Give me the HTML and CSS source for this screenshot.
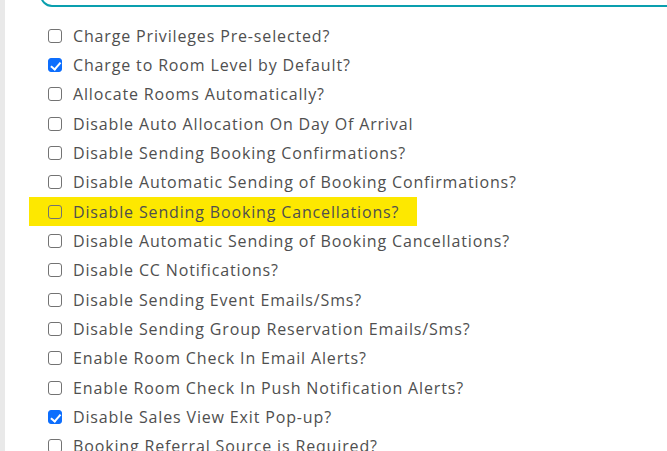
FILE: index.html
```html
<!DOCTYPE html>
<html>
<head>
<meta charset="utf-8">
<link rel="stylesheet" href="styles.css">
</head>
<body>
<div class="page">
  <div class="strip"></div>
  <div class="content">
    <div class="prev-field"></div>
    <ul class="options">
      <li class="opt"><input type="checkbox"><span>Charge Privileges Pre-selected?</span></li>
      <li class="opt"><input type="checkbox" checked><span>Charge to Room Level by Default?</span></li>
      <li class="opt"><input type="checkbox"><span>Allocate Rooms Automatically?</span></li>
      <li class="opt"><input type="checkbox"><span>Disable Auto Allocation On Day Of Arrival</span></li>
      <li class="opt"><input type="checkbox"><span>Disable Sending Booking Confirmations?</span></li>
      <li class="opt"><input type="checkbox"><span>Disable Automatic Sending of Booking Confirmations?</span></li>
      <li class="opt hl"><input type="checkbox"><span>Disable Sending Booking Cancellations?</span></li>
      <li class="opt"><input type="checkbox"><span>Disable Automatic Sending of Booking Cancellations?</span></li>
      <li class="opt"><input type="checkbox"><span>Disable CC Notifications?</span></li>
      <li class="opt"><input type="checkbox"><span>Disable Sending Event Emails/Sms?</span></li>
      <li class="opt"><input type="checkbox"><span>Disable Sending Group Reservation Emails/Sms?</span></li>
      <li class="opt"><input type="checkbox"><span>Enable Room Check In Email Alerts?</span></li>
      <li class="opt"><input type="checkbox"><span>Enable Room Check In Push Notification Alerts?</span></li>
      <li class="opt"><input type="checkbox" checked><span>Disable Sales View Exit Pop-up?</span></li>
      <li class="opt"><input type="checkbox"><span>Booking Referral Source is Required?</span></li>
    </ul>
  </div>
</div>
</body>
</html>
```
FILE: styles.css
```css
html, body {
  margin: 0;
  padding: 0;
  background: #ffffff;
  overflow: hidden;
}
.page {
  display: flex;
  height: 451px;
  font-family: "Open Sans", "Noto Sans", sans-serif;
}
.strip {
  width: 5px;
  flex: none;
  background: #e9e9e9;
}
.content {
  flex: 1;
  min-width: 0;
  padding-left: 24px;
}
.prev-field {
  height: 20px;
  margin-top: -17px;
  margin-left: 11px;
  margin-right: -30px;
  border: 2px solid #0a9fae;
  border-radius: 14px;
}
.options {
  list-style: none;
  margin: 14px 0 0 0;
  padding: 0;
}
.opt {
  display: flex;
  align-items: center;
  height: 29.35px;
  padding-left: 19px;
  font-size: 16px;
  letter-spacing: 0.85px;
  color: #4f4f4f;
  white-space: nowrap;
}
.opt input {
  -webkit-appearance: none;
  appearance: none;
  position: relative;
  box-sizing: border-box;
  width: 14px;
  height: 14px;
  margin: 0 11px 0 0;
  flex: none;
  border: 1.5px solid #737373;
  border-radius: 3px;
  background: transparent;
}
.opt input:checked {
  background: #0d6efd;
  border-color: #0d6efd;
}
.opt input:checked::after {
  content: "";
  position: absolute;
  left: 3.5px;
  top: 0.5px;
  width: 3.5px;
  height: 7.5px;
  border: solid #ffffff;
  border-width: 0 2.2px 2.2px 0;
  transform: rotate(40deg);
}
.opt.hl {
  width: fit-content;
  padding-right: 18px;
  background: #fde800;
}
```
